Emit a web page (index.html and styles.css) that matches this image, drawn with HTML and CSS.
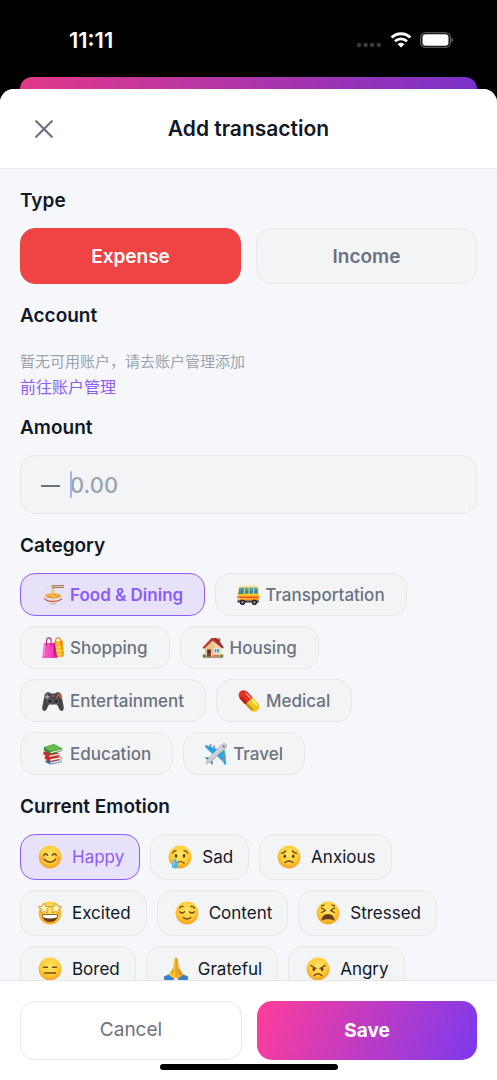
FILE: index.html
```html
<!DOCTYPE html>
<html lang="en">
<head>
<meta charset="utf-8">
<meta name="viewport" content="width=device-width, initial-scale=1">
<title>Add transaction</title>
<link rel="stylesheet" href="styles.css">
</head>
<body>
<svg class="defs" aria-hidden="true">
  <defs>
    <radialGradient id="skin" cx="50%" cy="38%" r="62%">
      <stop offset="0" stop-color="#ffe566"/><stop offset=".6" stop-color="#ffce3a"/><stop offset="1" stop-color="#f6a01c"/>
    </radialGradient>
    <linearGradient id="pink" x1="0" x2="1"><stop offset="0" stop-color="#ff62cf"/><stop offset="1" stop-color="#f02fae"/></linearGradient>
    <linearGradient id="bus" x1="0" y1="0" x2="0" y2="1"><stop offset="0" stop-color="#ffc928"/><stop offset="1" stop-color="#f58a1f"/></linearGradient>
    <linearGradient id="plane" x1="0" y1="0" x2="1" y2="1"><stop offset="0" stop-color="#ffffff"/><stop offset="1" stop-color="#9aa1a8"/></linearGradient>
    <symbol id="face" viewBox="0 0 24 24"><circle cx="12" cy="12" r="11.4" fill="url(#skin)"/></symbol>
  </defs>
</svg>

<div class="status">
  <time class="clock">11:11</time>
  <div class="indicators">
    <svg width="26" height="6" viewBox="0 0 26 6" fill="#3b3b3b" aria-hidden="true"><circle cx="3" cy="3" r="2.2"/><circle cx="9.6" cy="3" r="2.2"/><circle cx="16.2" cy="3" r="2.2"/><circle cx="22.8" cy="3" r="2.2"/></svg>
    <svg class="wifi" width="22" height="16" viewBox="0 0 22 16" fill="none" stroke="#fff" stroke-width="2.8" aria-label="Wi-Fi" role="img"><path d="M1.6 5.6a13.4 13.4 0 0 1 18.8 0"/><path d="M5 9.3a8.6 8.6 0 0 1 12 0"/><path d="M11 15.6 7.6 12.2a4.9 4.9 0 0 1 6.8 0z" fill="#fff" stroke="none"/></svg>
    <svg width="34" height="16" viewBox="0 0 34 16" aria-label="Battery" role="img"><rect x=".7" y=".7" width="29.6" height="14.6" rx="4.6" fill="none" stroke="#6f6f6f" stroke-width="1.1"/><rect x="2.5" y="2.3" width="26" height="11.4" rx="3.2" fill="#fff"/><path d="M31.6 5.5c1.8.8 1.8 4.2 0 5z" fill="#777"/></svg>
  </div>
</div>
<div class="behind"></div>

<form class="sheet">
  <header class="head">
    <button type="button" class="close" aria-label="Close"><svg width="18" height="18" viewBox="0 0 18 18" fill="none" stroke="#6b7280" stroke-width="2.2" stroke-linecap="round"><path d="M1.200 1.200l15.600 15.600M16.800 1.200L1.200 16.800"/></svg></button>
    <h1>Add transaction</h1>
  </header>

  <main class="content">
    <section>
      <h2>Type</h2>
      <div class="types">
        <button type="button" class="type expense" aria-pressed="true">Expense</button>
        <button type="button" class="type" aria-pressed="false">Income</button>
      </div>
    </section>

    <section>
      <h2>Account</h2>
      <div class="account" lang="zh">
        <p>暂无可用账户，请去账户管理添加</p>
        <a href="#accounts">前往账户管理</a>
      </div>
    </section>

    <section>
      <h2><label for="amount">Amount</label></h2>
      <div class="amount">
        <span class="minus"></span>
        <div class="entry"><span class="caret"></span><input id="amount" type="text" inputmode="decimal" placeholder="0.00"></div>
      </div>
    </section>

    <section>
      <h2>Category</h2>
      <div class="chips">
        <button type="button" class="chip selected" aria-pressed="true">
          <svg viewBox="0 0 24 24" aria-hidden="true"><path d="M6 7q-2-2 0-4M15 8q-1-2 1-3" stroke="#dfdfe3" stroke-width="1.6" fill="none"/><ellipse cx="12" cy="13.2" rx="10.4" ry="3.8" fill="#ece9e6"/><ellipse cx="12" cy="13" rx="8.6" ry="2.8" fill="#ed9832"/><path d="M5 13q3-2 6 0t7-1" stroke="#ffd97a" fill="none"/><path d="M11 2.5v10M12.6 2.5v9.5" stroke="#f3c351" stroke-width="1.3"/><path d="M10.5 1.4 24 1v1.200l-13.500.6zM11 3.600 24 3v1l-13 .7z" fill="#a5763f"/><path d="M1.600 13.500c1 3.200 3.800 6 6.400 7.400v1.500h8v-1.500c2.600-1.400 5.400-4.200 6.400-7.400-4 4.600-16.800 4.600-20.800 0z" fill="#e2dfe1"/><path d="M2.400 15.900c4 4 15.200 4 19.200 0" fill="none" stroke="#c94a3b" stroke-width="1.300"/><path d="M8 21.500h8" stroke="#b9b4b8"/></svg>
          <span>Food &amp; Dining</span></button>
        <button type="button" class="chip" aria-pressed="false">
          <svg viewBox="0 0 24 24" aria-hidden="true"><path d="M3.500 2.500Q4 1 6 1h14q2.500 0 2.800 2z" fill="#f6ecc0"/><path d="M2.200 3h21l.5 8.500H.5z" fill="#f4d96a"/><path d="M2.700 4.200h4.600v7H1.300zM8.500 4.200h4v6.500h-4zM13.600 4.200h4v6.500h-4zM18.700 4.200h3.700l.3 6.500h-4z" fill="#38899c"/><path d="m3 7 3-2.500M9 7l3-2.500M14 7l3-2.500M19 7l3-2.500" stroke="#8fd0d8"/><path d="M.5 11h23.300v7.500q0 1.500-1.500 1.500H2Q.5 20 .5 18z" fill="url(#bus)"/><path d="M.5 14.500h23.300" stroke="#e84e23" stroke-width="1.500"/><path d="M.5 18h23.300v2.200H.5z" fill="#4a4648"/><path d="M1 16h2M6 16h2" stroke="#fff1bb" stroke-width="1.500"/><g fill="#2e3035" stroke="#17181a"><circle cx="6" cy="20" r="2.600"/><circle cx="19" cy="20" r="2.600"/></g><circle cx="6" cy="20" r="1.200" fill="#a7adb5"/><circle cx="19" cy="20" r="1.200" fill="#a7adb5"/></svg>
          <span>Transportation</span></button>
        <button type="button" class="chip" aria-pressed="false">
          <svg viewBox="0 0 24 24" aria-hidden="true"><path d="m12.500 5 10-1 1.300 17-10.300 2z" fill="#f9bd20"/><path d="m19.500 4 3-.2 1.300 17.200-2.800.6z" fill="#e99a12"/><path d="M15 7q-1-6 2.500-6T21 6.500" fill="none" stroke="#d98c1c" stroke-width="1.200"/><path d="M15 11h6M15 15h7M15 19h7" stroke="#ffda4a" stroke-width="1.500"/><path d="M2 6.500h12l2.500 16.500H.2z" fill="url(#pink)"/><path d="m12 6.500 2 0 2.500 16.500-3.500-2z" fill="#c91b8c"/><path d="M5 10V4q0-3 2.500-3T10 4v6" fill="none" stroke="#b3267e" stroke-width="1.200"/><path d="M3 8.500 2 21" stroke="#ff9ae0"/></svg>
          <span>Shopping</span></button>
        <button type="button" class="chip" aria-pressed="false">
          <svg viewBox="0 0 24 24" aria-hidden="true"><path d="M17 1.500h3V8h-3z" fill="#a65c45"/><path d="M3.500 11 10.500 3l10 9.500V22h-17z" fill="#f6d7a3"/><path d="m10.500 3 4 4-3 15h-8V11z" fill="#edc48b"/><path d="M.6 11.500 10.300 1 13 1l10.600 10-1.500 1.600L11.500 4 2.200 13z" fill="#bd3931"/><path d="m12.500 1 3.500 0 7.600 10-1.500 1.500z" fill="#963029"/><path d="M5.500 13.500h4.300V22H5.500z" fill="#81462d"/><path d="M6.300 14.500h2.600v3H6.300z" fill="#4b2f2d"/><path d="M13 12.500h5.800v5H13z" fill="#fff"/><path d="M13.800 13.200h2v3.600h-2zM16.500 13.200h2v3.600h-2z" fill="#459bc0"/><path d="M4 22h17" stroke="#a38a69" stroke-width="1.500"/><circle cx="2.500" cy="20.800" r="2" fill="#548b36"/><circle cx="21.500" cy="20.800" r="2" fill="#67953b"/><path d="M12 20.500h7" stroke="#d05d63" stroke-width="1.500"/></svg>
          <span>Housing</span></button>
        <button type="button" class="chip" aria-pressed="false">
          <svg viewBox="0 0 24 24" aria-hidden="true"><path d="M3 5q1-2.500 4-2.500 2 0 2.500 1.200h5Q15 2.500 17 2.500q3 0 4 2.500l2.700 13.500c.5 5-3.400 5.500-4.700 2.500l-2.600-5.200H7.600L5 21c-1.300 3-5.200 2.500-4.700-2.500z" fill="#454549"/><path d="M4.500 3.500q2-1.500 4 0M15.500 3.500q2-1.500 4 0" stroke="#777a80" fill="none"/><path d="M5.600 5v5M3.100 7.500h5" stroke="#b8babd" stroke-width="1.200"/><circle cx="18.500" cy="5.600" r="1.500" fill="#de5b34"/><circle cx="20.500" cy="8" r="1.300" fill="#e55f37"/><circle cx="16.300" cy="7.500" r="1.200" fill="#b85037"/><g fill="#222326" stroke="#7b7e82" stroke-width=".8"><circle cx="8.600" cy="12.300" r="2.500"/><circle cx="15.400" cy="12.300" r="2.500"/></g><path d="M10.500 6.500h3" stroke="#8e9299"/></svg>
          <span>Entertainment</span></button>
        <button type="button" class="chip" aria-pressed="false">
          <svg viewBox="0 0 24 24" aria-hidden="true"><g transform="rotate(47 12 12)"><path d="M12 6.500h8.500a5.500 5.500 0 0 1 0 11H12z" fill="#efc826"/><path d="M12 6.500H3.500a5.500 5.500 0 0 0 0 11H12z" fill="#df3124"/><path d="M3 14.500h9v3H3z" fill="#b81e1b"/><path d="M12 14.500h11q-1 3-3 3h-8z" fill="#c99a15"/><path d="M3.500 8.800h7" stroke="#ff9b87" stroke-width="1.500" stroke-linecap="round"/><path d="M13 8.800h7.500" stroke="#fff28b" stroke-width="1.700" stroke-linecap="round"/></g></svg>
          <span>Medical</span></button>
        <button type="button" class="chip" aria-pressed="false">
          <svg viewBox="0 0 24 24" aria-hidden="true"><path d="m4 19 9-2 8.500 2v2l-12.500 2.500L4 21z" fill="#3f65a0"/><path d="m9 21 12-2.400v1.800L9 22.700z" fill="#e8e6df"/><path d="m3 14.500 10-2 8.500 3v2L9 20.500l-6-3.300z" fill="#c82d2a"/><path d="m9 17.700 12-2.300v1.400L9 19.500z" fill="#f4e9df"/><path d="m1.500 9.500 9-1.500 9 3.500v2L8 16l-6.500-3.500z" fill="#bd302c"/><path d="m8 13.500 12-2.300v1.600L8 15.300z" fill="#eee9db"/><path d="m2 4.700 11-3.500L22 6v2.800L9.500 12 2 8z" fill="#318d39"/><path d="m2 4.700 11-3.500L22 6 9.500 9.300z" fill="#68b94f"/><path d="m9.500 9.700 12-3v1.500l-12 3z" fill="#e8ecd8"/></svg>
          <span>Education</span></button>
        <button type="button" class="chip" aria-pressed="false">
          <svg viewBox="0 0 24 24" aria-hidden="true"><path d="M14.500 7.500.8 2.500l-.5 1.700 9 8.500zM16.500 9.500l4.700 13.700 1.600-.2L21 8z" fill="#27a3df" stroke="#27a3df" stroke-width=".8"/><path d="m14.500 7.500 2.500 2 2.500 11-8-8-9-8z" fill="#27a3df"/><path d="m6 16.500-5-1.200-.8 1.200 4 2.200zM7.500 18l1.200 5-1.400.8-2-4.500z" fill="#218fc8"/><path d="M5 1h2v4H5zM9 2.600h2v3.500H9zM19 13h4v2h-4zM18 17h4v2h-4z" fill="#8a9299"/><path d="M22.800 1.100c1.500 1.200.3 4-1.500 5.800L7.500 19.600c-1.800 1.500-4 2.500-6.300 3 .5-2.200 1.500-4.500 3-6.200L17 2.600c1.800-1.700 4.400-2.700 5.800-1.500z" fill="url(#plane)" stroke="#868d94" stroke-width=".5"/><path d="M19.500 2.800 21.300 4.500" stroke="#3d566b" stroke-width="1.200"/></svg>
          <span>Travel</span></button>
      </div>
    </section>

    <section>
      <h2>Current Emotion</h2>
      <div class="chips emotions">
        <button type="button" class="chip selected" aria-pressed="true">
          <svg viewBox="0 0 24 24" aria-hidden="true"><use href="#face"/><circle cx="4.500" cy="13.500" r="2.500" fill="#f78842" opacity=".5"/><circle cx="19.500" cy="13.500" r="2.500" fill="#f78842" opacity=".5"/><g fill="none" stroke="#6c3c16" stroke-width="1.400" stroke-linecap="round"><path d="M5.700 10.300q2-3 4 0M14.300 10.300q2-3 4 0M6.500 14.500q5.500 5.500 11 0"/></g></svg>
          <span>Happy</span></button>
        <button type="button" class="chip" aria-pressed="false">
          <svg viewBox="0 0 24 24" aria-hidden="true"><use href="#face"/><g fill="#663b18"><ellipse cx="8" cy="10.800" rx="1.300" ry="1.900"/><ellipse cx="16" cy="10.800" rx="1.300" ry="1.900"/></g><path d="M4.500 8q1-2 3.500-2.300M19.500 8q-1-2-3.500-2.300M9 18q3.500-3 7 0" fill="none" stroke="#713e18" stroke-width="1.200" stroke-linecap="round"/><path d="M7 13.200c1 2 3.200 4.500 3.200 7a3.200 3.200 0 0 1-6.400 0c0-2.500 2.200-5 3.200-7z" fill="#48b7ea"/><path d="M6.500 17q-1.300 2-.8 3.500" stroke="#baf0ff" fill="none"/></svg>
          <span>Sad</span></button>
        <button type="button" class="chip" aria-pressed="false">
          <svg viewBox="0 0 24 24" aria-hidden="true"><use href="#face"/><g fill="#663b18"><ellipse cx="7.800" cy="11.300" rx="1.300" ry="1.700"/><ellipse cx="16.200" cy="11.300" rx="1.300" ry="1.700"/></g><path d="M4.500 8.300q2.500-.3 4-2.300M19.500 8.300q-2.500-.3-4-2.300M8 17.500q4-3 8 0" fill="none" stroke="#713e18" stroke-width="1.300" stroke-linecap="round"/></svg>
          <span>Anxious</span></button>
        <button type="button" class="chip" aria-pressed="false">
          <svg viewBox="0 0 24 24" aria-hidden="true"><use href="#face"/><path d="M4 13.200h16q-.6 7.800-8 7.800t-8-7.800z" fill="#67401d"/><path d="M4.800 13.900h14.400l-.7 2.500q-6.500 2-13 0z" fill="#fff"/><g fill="#fff3b8" stroke="#bd7d1d" stroke-width=".7" stroke-linejoin="round"><path d="m6.200 2.200 1.500 3.200 3.600.2-2.500 2.700 1 3.600-3.500-1.600-3.300 1.900.4-3.900L.3 5.800l3.800-.6z"/><path d="m17.800 2.200-1.500 3.200-3.600.2 2.500 2.700-1 3.600 3.500-1.600 3.300 1.900-.4-3.900 3.100-2.500-3.800-.6z"/></g></svg>
          <span>Excited</span></button>
        <button type="button" class="chip" aria-pressed="false">
          <svg viewBox="0 0 24 24" aria-hidden="true"><use href="#face"/><path d="M4.500 7q1.500-2 3.500-1.500M19.500 7q-1.500-2-3.500-1.500M4.700 10.700q2.400 2.600 4.800 0M14.500 10.700q2.400 2.600 4.800 0M8.300 16.500q3.700 3 7.400 0" fill="none" stroke="#7a431b" stroke-width="1.300" stroke-linecap="round"/></svg>
          <span>Content</span></button>
        <button type="button" class="chip" aria-pressed="false">
          <svg viewBox="0 0 24 24" aria-hidden="true"><use href="#face"/><path d="m5.500 7 4 2.500-4 2M18.500 7l-4 2.500 4 2M5.500 4.800 8 4M18.500 4.800 16 4" fill="none" stroke="#70401c" stroke-width="1.300" stroke-linecap="round" stroke-linejoin="round"/><path d="M5.500 19.500q.5-6.500 6.500-6.500t6.500 6.500q-6.500-2.500-13 0z" fill="#68401f"/></svg>
          <span>Stressed</span></button>
        <button type="button" class="chip" aria-pressed="false">
          <svg viewBox="0 0 24 24" aria-hidden="true"><use href="#face"/><path d="M5.500 10.200h4M14.500 10.200h4M6.500 16h11" fill="none" stroke="#7c4819" stroke-width="1.400" stroke-linecap="round"/></svg>
          <span>Bored</span></button>
        <button type="button" class="chip" aria-pressed="false">
          <svg viewBox="0 0 24 24" aria-hidden="true"><path d="M11.700.6c-2 .3-1.900 5-2.300 8.200-.5 3.500-3.500 6.500-5.100 9.700L8 24l3.700-3z" fill="#ffc72d"/><path d="M12.300.6c2 .3 1.900 5 2.300 8.200.5 3.500 3.500 6.500 5.100 9.700L16 24l-3.700-3z" fill="#f6aa1c"/><path d="M12 1v19M9 12.500q-.2 3-2 5M15 12.500q.2 3 2 5" stroke="#b97412" stroke-width=".8" fill="none"/><path d="M0 19.500 4.400 17.500l6 4.500-2 2H0zM24 19.500 19.600 17.500l-6 4.500 2 2H24z" fill="#3c82cb"/></svg>
          <span>Grateful</span></button>
        <button type="button" class="chip" aria-pressed="false">
          <svg viewBox="0 0 24 24" aria-hidden="true"><use href="#face"/><g fill="#663b18"><ellipse cx="7.800" cy="12.500" rx="1.300" ry="1.700"/><ellipse cx="16.200" cy="12.500" rx="1.300" ry="1.700"/></g><path d="m5 8.600 5 2.900M19 8.600l-5 2.900M8.300 18.500q3.700-3.300 7.400 0" fill="none" stroke="#713e18" stroke-width="1.400" stroke-linecap="round"/></svg>
          <span>Angry</span></button>
      </div>
    </section>
  </main>

  <footer class="foot">
    <button type="button" class="cancel">Cancel</button>
    <button type="submit" class="save">Save</button>
    <span class="home"></span>
  </footer>
</form>
</body>
</html>
```
FILE: styles.css
```css
* { box-sizing: border-box; }

body {
  margin: 0;
  height: 100vh;
  display: flex;
  flex-direction: column;
  background: #000;
  color: #111827;
  font-family: Inter, "Noto Sans CJK SC", sans-serif;
}

h1, h2, p { margin: 0; }

button, input {
  font-family: inherit;
  margin: 0;
}

button { cursor: pointer; }

.defs { position: absolute; width: 0; height: 0; }

.status {
  flex: none;
  height: 77px;
  padding: 4px 43px 0 69px;
  display: flex;
  justify-content: space-between;
  color: #fff;
}

.clock {
  font-size: 22px;
  font-weight: 600;
  line-height: 72px;
}

.indicators {
  display: flex;
  align-items: center;
  gap: 8px;
  height: 72px;
}

.indicators svg:first-child { margin-top: 10px; }

.behind {
  flex: none;
  height: 24px;
  margin: 0 20px -12px;
  border-radius: 12px 12px 0 0;
  background: linear-gradient(90deg, #e23888, #7a31c8);
}

.sheet {
  position: relative;
  flex: 1;
  min-height: 0;
  display: flex;
  flex-direction: column;
  overflow: hidden;
  border-radius: 14px 14px 0 0;
  background: #f5f7fb;
}

.head {
  flex: none;
  height: 80px;
  padding: 0 20px;
  display: grid;
  grid-template-columns: 48px 1fr 48px;
  align-items: center;
  background: #fff;
  border-bottom: 1px solid #e5e7eb;
}

.head h1 {
  font-size: 21px;
  font-weight: 600;
  line-height: 28px;
  text-align: center;
}

.close {
  width: 48px;
  height: 48px;
  padding: 0;
  display: grid;
  place-items: center;
  border: 0;
  background: none;
}

.content {
  flex: 1;
  min-height: 0;
  padding: 20px;
  display: flex;
  flex-direction: column;
  gap: 20px;
  overflow-y: auto;
  scrollbar-width: none;
}

.content section { flex: none; }

.content h2 {
  margin-bottom: 15px;
  font-size: 19px;
  font-weight: 600;
  line-height: 24px;
}

.types { display: flex; gap: 15px; }

.type {
  flex: 1;
  height: 56px;
  border: 1px solid #e5e7eb;
  border-radius: 15px;
  background: #f3f4f6;
  color: #6b7280;
  font-size: 19px;
  font-weight: 600;
}

.type.expense {
  border-color: #ef4444;
  background: #ef4444;
  color: #fff;
}

.account {
  padding-top: 8px;
  display: flex;
  flex-direction: column;
  align-items: flex-start;
  gap: 5px;
}

.account p {
  color: #9ca3af;
  font-size: 15px;
  line-height: 22px;
}

.account a {
  color: #8b5cf6;
  font-size: 16px;
  line-height: 18px;
  text-decoration: none;
}

.amount {
  height: 59px;
  padding: 0 20px;
  display: flex;
  align-items: center;
  gap: 10px;
  border: 1px solid #e5e7eb;
  border-radius: 15px;
  background: #f3f4f6;
}

.minus {
  width: 19px;
  height: 2px;
  margin-top: 3px;
  background: #6b7280;
}

.entry { position: relative; flex: 1; }

.entry input {
  display: block;
  width: 100%;
  height: 32px;
  padding: 0;
  border: 0;
  outline: 0;
  background: none;
  color: #111827;
  font-size: 22px;
  font-weight: 500;
}

.entry input::placeholder { color: #9ca3af; opacity: 1; }

.caret {
  position: absolute;
  top: 2px;
  left: 0;
  width: 2px;
  height: 27px;
  border-radius: 1px;
  background: #9db2fb;
}

.chips {
  display: flex;
  flex-wrap: wrap;
  gap: 10px;
}

.chip {
  height: 43px;
  padding: 0 21px;
  display: flex;
  align-items: center;
  gap: 6px;
  border: 1px solid #e5e7eb;
  border-radius: 15px;
  background: #f3f4f6;
  color: #6b7280;
  font-size: 17px;
  font-weight: 500;
}

.chip svg { flex: none; width: 22px; height: 22px; }

.chip.selected {
  border-color: #8b5cf6;
  background: #e8e1fa;
  color: #8b5cf6;
  font-weight: 600;
}

.emotions .chip {
  height: 46px;
  padding: 0 15px 0 17px;
  gap: 10px;
  color: #111827;
  font-weight: 400;
}

.emotions .chip svg { width: 24px; height: 24px; }

.emotions .chip.selected { color: #8b5cf6; }

.foot {
  position: relative;
  flex: none;
  padding: 20px;
  display: flex;
  gap: 15px;
  background: #fff;
  border-top: 1px solid #e5e7eb;
}

.foot button {
  flex: 1;
  height: 59px;
  padding: 0;
  border-radius: 15px;
}

.foot .cancel {
  padding-bottom: 3px;
  border: 1px solid #e5e7eb;
  background: #fff;
  color: #6b7280;
  font-size: 19px;
  font-weight: 400;
}

.foot .save {
  border: 0;
  background: linear-gradient(110deg, #ff3d9a, #7c3aed);
  color: #fff;
  font-size: 19px;
  font-weight: 700;
}

.home {
  position: absolute;
  bottom: 10px;
  left: 50%;
  width: 178px;
  height: 6px;
  margin-left: -89px;
  border-radius: 3px;
  background: #000;
}
```
